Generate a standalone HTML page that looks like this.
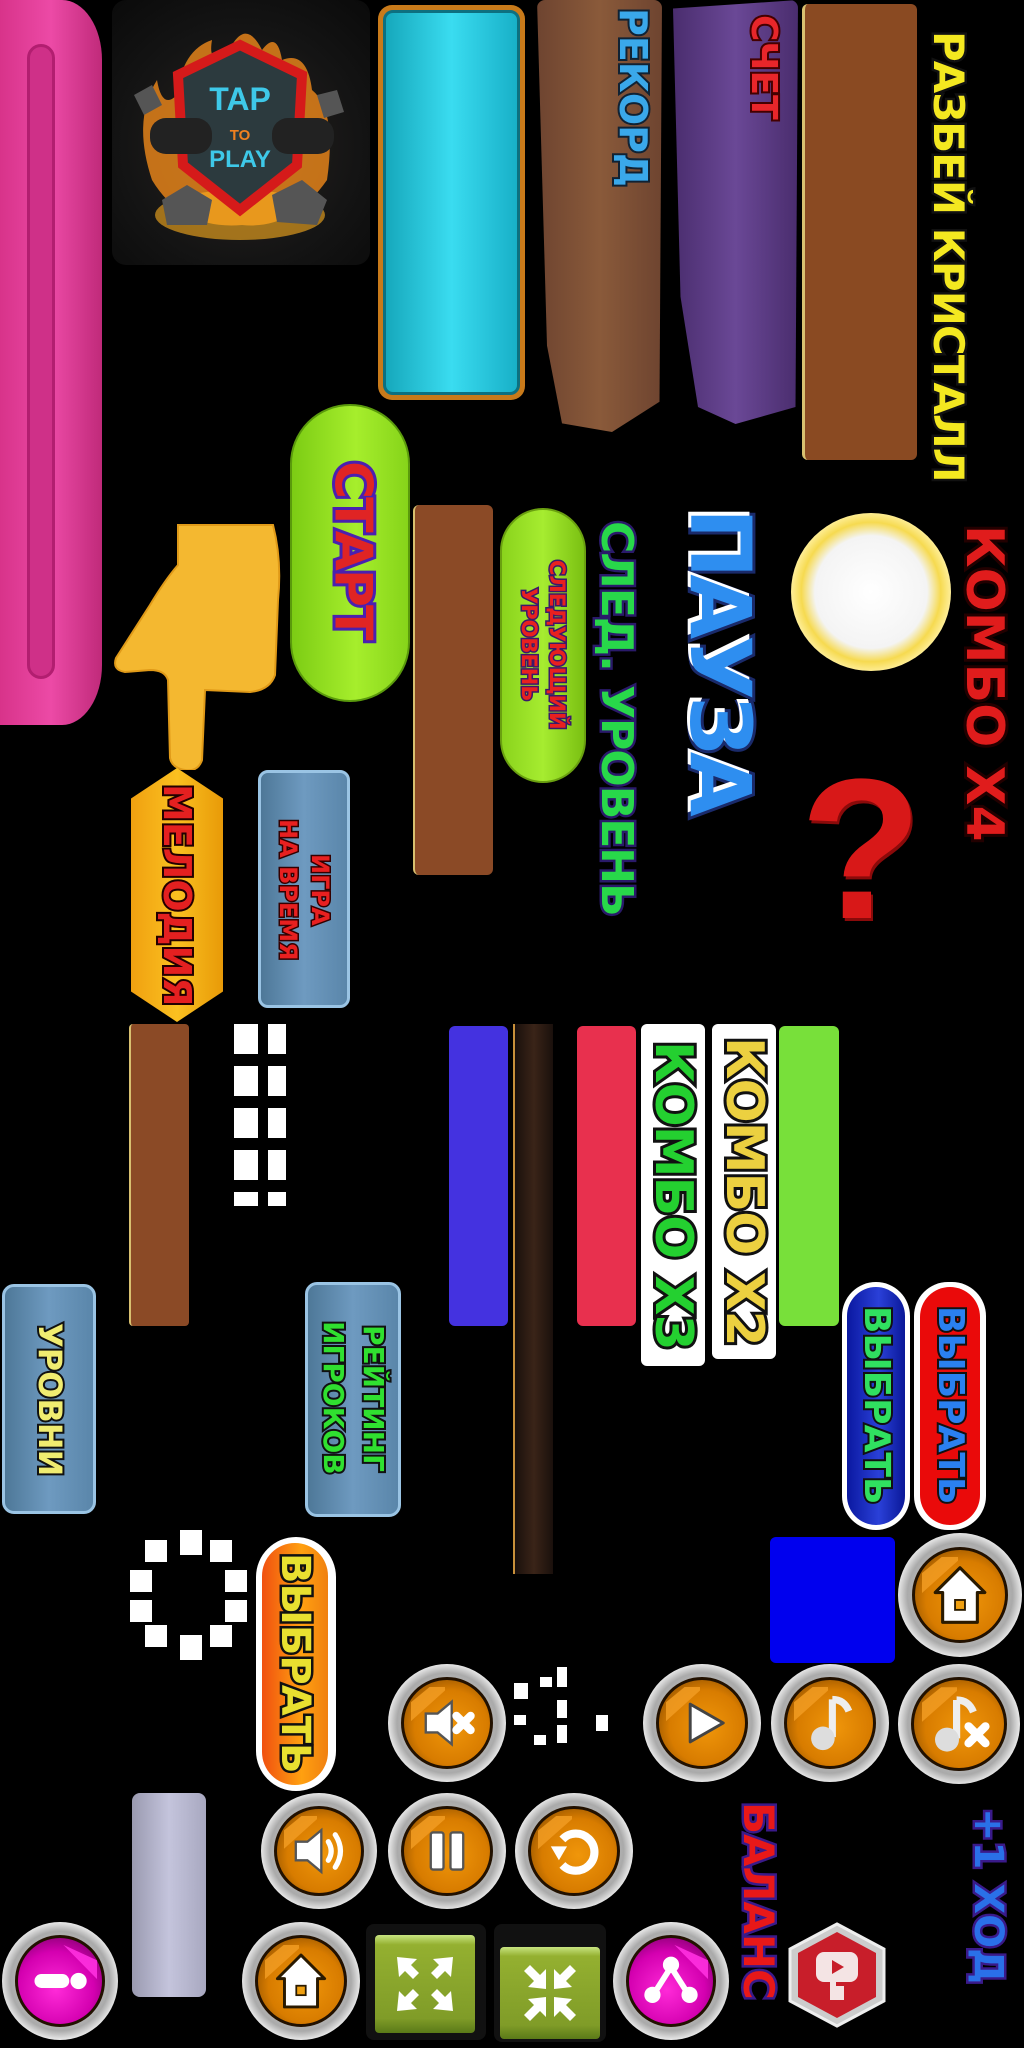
<!DOCTYPE html>
<html><head><meta charset="utf-8">
<style>
*{margin:0;padding:0;box-sizing:border-box}
html,body{width:1024px;height:2048px;background:#000;overflow:hidden}
body{position:relative;font-family:"Liberation Sans","DejaVu Sans",sans-serif}
.a{position:absolute}
.v{position:absolute;writing-mode:vertical-rl;font-weight:700;font-family:"DejaVu Sans","Liberation Sans",sans-serif;white-space:nowrap;line-height:1;text-align:center;display:flex;align-items:center;justify-content:center;paint-order:stroke fill}
.btn{position:absolute;border-radius:50%;background:radial-gradient(circle,#eee 0,#aaa 60%,#fff 75%,#888 100%)}
.btn .in{position:absolute;left:11%;top:11%;right:11%;bottom:11%;border-radius:50%;background:radial-gradient(circle at 55% 55%,#f0960a 0,#d87c00 55%,#6a3a00 100%);border:3px solid #221100;overflow:hidden}
.btn .in:before{content:"";position:absolute;left:8%;top:8%;width:40%;height:40%;background:#f09a20;clip-path:polygon(0 100%,0 45%,55% 0,100% 0,100% 10%);opacity:.9}
.btn.pk .in{background:radial-gradient(circle at 45% 60%,#ff2ad8 0,#d400b0 55%,#5a0050 100%)}
.btn.pk .in:before{left:auto;right:6%;background:#ff30e0;clip-path:polygon(0 0,100% 45%,100% 100%)}
.btn svg{position:absolute;left:0;top:0;width:100%;height:100%}
</style></head><body>

<div class="a" style="left:0;top:0;width:102px;height:725px;background:linear-gradient(90deg,#d8338a,#ec4aa6 50%,#c02a7a);border-radius:0 40px 40px 0/0 60px 60px 0"></div>
<div class="a" style="left:27px;top:44px;width:28px;height:635px;border-radius:14px;background:#cf3088;border:3px solid #b21e70"></div>

<div class="a" style="left:112px;top:0;width:258px;height:265px;background:radial-gradient(circle at 50% 55%,#2a2420,#141414 60%,#0a0a0a);border-radius:14px"></div>
<svg class="a" style="left:112px;top:0" width="258" height="265" viewBox="0 0 258 265">
 <path d="M40 180 Q20 120 45 80 Q50 110 65 95 Q70 50 100 40 Q95 70 120 45 Q135 20 150 50 Q165 30 170 60 Q195 50 200 90 Q225 110 215 180 Q180 230 130 225 Q70 230 40 180Z" fill="#f08a1a" opacity=".8"/>
 <ellipse cx="128" cy="215" rx="85" ry="25" fill="#ffb020" opacity=".6"/>
 <path d="M128 45 L190 75 L185 165 L128 210 L71 165 L66 75 Z" fill="#2c3a3e" stroke="#d51a1a" stroke-width="10"/>
 <text x="128" y="110" fill="#3ec8e8" font-family="Liberation Sans" font-weight="bold" font-size="32" text-anchor="middle">TAP</text>
 <text x="128" y="140" fill="#f08020" font-family="Liberation Sans" font-weight="bold" font-size="15" text-anchor="middle">TO</text>
 <text x="128" y="167" fill="#3ec8e8" font-family="Liberation Sans" font-weight="bold" font-size="24" text-anchor="middle">PLAY</text>
 <rect x="38" y="118" width="62" height="36" rx="16" fill="#222"/>
 <rect x="160" y="118" width="62" height="36" rx="16" fill="#222"/>
 <path d="M50 200 L75 185 L100 200 L95 225 L55 225Z" fill="#555"/><path d="M160 195 L190 180 L215 200 L205 225 L165 222Z" fill="#555"/>
 <path d="M22 95 L40 85 L50 105 L32 115Z" fill="#555"/><path d="M205 95 L225 90 L232 112 L212 118Z" fill="#555"/>
</svg>

<div class="a" style="left:378px;top:5px;width:147px;height:395px;border-radius:14px;background:#c87a1a;padding:5px">
 <div style="width:100%;height:100%;border-radius:10px;background:linear-gradient(90deg,#16a8bc,#3adcf0 50%,#18b0c8);border:3px solid #0d7080"></div>
</div>

<div class="a" style="left:537px;top:0;width:125px;height:432px;background:linear-gradient(90deg,#6e4430,#8a5a3a 50%,#6e4430);clip-path:polygon(0 0,100% 0,98% 93%,60% 100%,20% 98%,8% 80%);border-radius:8px"></div>
<div class="v" style="left:611px;top:10px;width:44px;height:175px;font-size:38px;color:#3aa8ea;-webkit-text-stroke:4px #123">РЕКОРД</div>

<div class="a" style="left:673px;top:0;width:125px;height:424px;background:linear-gradient(90deg,#4a2d6e,#6a4896 50%,#4a2d6e);clip-path:polygon(0 2%,100% 0,98% 96%,50% 100%,20% 96%,6% 70%);border-radius:8px"></div>
<div class="v" style="left:742px;top:16px;width:42px;height:102px;font-size:36px;color:#e8262a;-webkit-text-stroke:4px #400">СЧЕТ</div>

<div class="a" style="left:802px;top:4px;width:115px;height:456px;background:#8a4a22;border-left:3px solid #d8c070;border-radius:6px"></div>
<div class="v" style="left:921px;top:7px;width:54px;height:498px;font-size:42px;color:#f4e820;-webkit-text-stroke:5px #111;letter-spacing:-1px">РАЗБЕЙ КРИСТАЛЛ</div>

<div class="a" style="left:791px;top:513px;width:160px;height:158px;border-radius:50%;background:radial-gradient(circle,#fff 0,#f4f4f4 50%,#f6da50 62%,#fff0a0 72%,#fff 80%,#e8e8e8 100%)"></div>
<div class="v" style="left:951px;top:516px;width:66px;height:334px;font-size:52px;color:#e01c1c;-webkit-text-stroke:6px #200">КОМБО Х4</div>

<div class="v" style="left:669px;top:509px;width:102px;height:302px;font-size:84px;color:#2e8ef0;-webkit-text-stroke:6px #1a2a6a;text-shadow:-4px 3px 0 #fff;letter-spacing:-4px">ПАУЗА</div>

<div class="a" style="left:800px;top:755px;width:120px;height:190px;font-weight:700;font-size:200px;line-height:190px;color:#d81818;text-align:center;text-shadow:2px 3px 0 #8a0a0a">?</div>

<div class="v" style="left:590px;top:516px;width:52px;height:405px;font-size:44px;color:#28d84a;-webkit-text-stroke:5px #2a1a6a;letter-spacing:-1px">СЛЕД. УРОВЕНЬ</div>

<div class="a" style="left:500px;top:508px;width:86px;height:275px;border-radius:43px;background:linear-gradient(90deg,#8ad31c,#a6ec30 50%,#7ac012);border:2px solid #6aa010"></div>
<div class="v" style="left:512px;top:560px;width:62px;height:170px;font-size:21px;line-height:28px;color:#e82020;-webkit-text-stroke:3px #3a1a6a">СЛЕДУЮЩИЙ<br>УРОВЕНЬ</div>

<div class="a" style="left:413px;top:505px;width:80px;height:370px;background:#8b4a26;border-left:2px solid #d8c070;border-radius:6px"></div>

<div class="a" style="left:290px;top:404px;width:120px;height:298px;border-radius:60px;background:linear-gradient(90deg,#7ccc14,#a6ee2c 55%,#86d41a);border:2px solid #5a9a0c"></div>
<div class="v" style="left:325px;top:465px;width:55px;height:170px;font-size:52px;color:#e02424;-webkit-text-stroke:6px #4a20b0;letter-spacing:-2px">СТАРТ</div>

<svg class="a" style="left:110px;top:520px" width="175" height="250" viewBox="0 0 175 250">
 <path d="M68 5 L163 5 Q172 40 168 80 L165 155 Q160 170 140 172 L95 170 L92 240 Q88 252 75 250 Q62 248 60 238 L58 160 Q55 150 40 150 L15 152 Q2 150 6 138 L40 85 Q55 60 68 45 Z" fill="#f4b830" stroke="#e09a18" stroke-width="2"/>
</svg>

<div class="a" style="left:131px;top:768px;width:92px;height:254px;background:linear-gradient(90deg,#f0a010,#fac020 50%,#e89a08);clip-path:polygon(50% 0,100% 12%,100% 88%,50% 100%,0 88%,0 12%)"></div>
<div class="v" style="left:150px;top:790px;width:54px;height:210px;font-size:38px;color:#e42020;-webkit-text-stroke:4px #200">МЕЛОДИЯ</div>

<div class="a" style="left:258px;top:770px;width:92px;height:238px;background:linear-gradient(90deg,#4e7898,#6e9ac0 50%,#5a86aa);border-radius:10px;border:3px solid #9ac4e4"></div>
<div class="v" style="left:268px;top:800px;width:72px;height:180px;font-size:24px;line-height:32px;color:#e82020;-webkit-text-stroke:3px #300">ИГРА<br>НА ВРЕМЯ</div>

<div class="a" style="left:129px;top:1024px;width:60px;height:302px;background:#8b4a26;border-left:2px solid #d8c070;border-radius:4px"></div>
<div class="a" style="left:234px;top:1024px;width:52px;height:182px;background:repeating-linear-gradient(180deg,#fff 0 30px,#000 30px 42px)"></div>
<div class="a" style="left:258px;top:1024px;width:10px;height:182px;background:#000"></div>
<div class="a" style="left:449px;top:1026px;width:59px;height:300px;background:#4432e0;border-radius:6px"></div>
<div class="a" style="left:513px;top:1024px;width:40px;height:550px;background:linear-gradient(90deg,#1a100c,#3a2418 50%,#1a100c);border-left:2px solid #c8903a"></div>
<div class="a" style="left:577px;top:1026px;width:59px;height:300px;background:#e8304e;border-radius:6px"></div>
<div class="a" style="left:779px;top:1026px;width:60px;height:300px;background:#78e03a;border-radius:6px"></div>
<div class="v" style="left:641px;top:1024px;width:64px;height:342px;font-size:52px;color:#24d030;-webkit-text-stroke:6px #111;background:#fff;border-radius:6px;letter-spacing:-1px">КОМБО Х3</div>
<div class="v" style="left:712px;top:1024px;width:64px;height:335px;font-size:52px;color:#ecd040;-webkit-text-stroke:6px #111;background:#fff;border-radius:6px;letter-spacing:-1px">КОМБО Х2</div>

<div class="a" style="left:2px;top:1284px;width:94px;height:230px;background:linear-gradient(90deg,#4e7898,#6e9ac0 50%,#5a86aa);border-radius:12px;border:3px solid #9ac4e4"></div>
<div class="v" style="left:25px;top:1330px;width:50px;height:140px;font-size:32px;color:#f0ec70;-webkit-text-stroke:4px #111">УРОВНИ</div>
<div class="a" style="left:305px;top:1282px;width:96px;height:235px;background:linear-gradient(90deg,#4e7898,#6e9ac0 50%,#5a86aa);border-radius:12px;border:3px solid #9ac4e4"></div>
<div class="v" style="left:312px;top:1318px;width:82px;height:160px;font-size:28px;line-height:40px;color:#30e030;-webkit-text-stroke:4px #111">РЕЙТИНГ<br>ИГРОКОВ</div>

<div class="a" style="left:842px;top:1282px;width:68px;height:248px;background:#fff;border-radius:34px"></div>
<div class="a" style="left:847px;top:1287px;width:58px;height:238px;background:linear-gradient(90deg,#0a18a0,#2a40d8 55%,#0a1898);border-radius:29px"></div>
<div class="v" style="left:852px;top:1310px;width:48px;height:190px;font-size:36px;color:#30e060;-webkit-text-stroke:4px #111">ВЫБРАТЬ</div>
<div class="a" style="left:914px;top:1282px;width:72px;height:248px;background:#fff;border-radius:34px"></div>
<div class="a" style="left:920px;top:1287px;width:60px;height:238px;background:#ea0a0a;border-radius:30px"></div>
<div class="v" style="left:926px;top:1310px;width:48px;height:190px;font-size:36px;color:#2a80f0;-webkit-text-stroke:4px #111">ВЫБРАТЬ</div>

<svg class="a" style="left:125px;top:1525px" width="135" height="150" viewBox="0 0 135 150">
 <g fill="#fff"><rect x="55" y="5" width="22" height="25"/><rect x="20" y="15" width="22" height="22"/><rect x="85" y="15" width="22" height="22"/><rect x="5" y="45" width="22" height="22"/><rect x="100" y="45" width="22" height="22"/><rect x="5" y="75" width="22" height="22"/><rect x="100" y="75" width="22" height="22"/><rect x="20" y="100" width="22" height="22"/><rect x="85" y="100" width="22" height="22"/><rect x="55" y="110" width="22" height="25"/></g>
</svg>

<div class="a" style="left:256px;top:1537px;width:80px;height:254px;background:#fff;border-radius:40px"></div>
<div class="a" style="left:262px;top:1543px;width:66px;height:242px;background:linear-gradient(90deg,#f05010,#ffa010 60%,#f08010);border-radius:33px"></div>
<div class="v" style="left:268px;top:1568px;width:54px;height:190px;font-size:40px;color:#e8e030;-webkit-text-stroke:5px #111">ВЫБРАТЬ</div>

<div class="a" style="left:770px;top:1537px;width:125px;height:126px;background:#0000ee;border-radius:6px"></div>

<div class="btn" style="left:898px;top:1533px;width:124px;height:124px"><div class="in"></div><svg viewBox="0 0 100 100"><path d="M50 28 L70 48 L64 48 L64 72 L36 72 L36 48 L30 48 Z" fill="#fff" stroke="#2a1a00" stroke-width="2.5" stroke-linejoin="round"/><rect x="46" y="54" width="8" height="8" fill="#f0a010" stroke="#2a1a00" stroke-width="1.5"/></svg></div>

<div class="btn" style="left:388px;top:1664px;width:118px;height:118px"><div class="in"></div><svg viewBox="0 0 100 100"><path d="M32 42 L42 42 L54 32 L54 68 L42 58 L32 58 Z" fill="#fff" stroke="#555" stroke-width="2"/><path d="M58 44 L70 56 M70 44 L58 56" stroke="#fff" stroke-width="7" stroke-linecap="round"/></svg></div>

<svg class="a" style="left:512px;top:1665px" width="100" height="90" viewBox="0 0 100 90"><g fill="#fff"><rect x="2" y="18" width="14" height="16"/><rect x="28" y="12" width="12" height="10"/><rect x="45" y="2" width="10" height="20"/><rect x="45" y="35" width="10" height="18"/><rect x="2" y="50" width="12" height="10"/><rect x="22" y="70" width="12" height="10"/><rect x="84" y="50" width="12" height="16"/><rect x="45" y="60" width="10" height="18"/></g></svg>

<div class="btn" style="left:643px;top:1664px;width:118px;height:118px"><div class="in"></div><svg viewBox="0 0 100 100"><path d="M40 34 L68 50 L40 66 Z" fill="#fff" stroke="#444" stroke-width="2.5" stroke-linejoin="round"/></svg></div>
<div class="btn" style="left:771px;top:1664px;width:118px;height:118px"><div class="in"></div><svg viewBox="0 0 100 100"><path d="M52 30 L52 62" stroke="#eee" stroke-width="6"/><path d="M52 30 Q62 30 66 40" stroke="#eee" stroke-width="6" fill="none"/><circle cx="44" cy="63" r="10" fill="#ddd"/></svg></div>
<div class="btn" style="left:898px;top:1664px;width:122px;height:120px"><div class="in"></div><svg viewBox="0 0 100 100"><path d="M48 30 L48 62" stroke="#eee" stroke-width="6"/><path d="M48 30 Q58 30 62 40" stroke="#eee" stroke-width="6" fill="none"/><circle cx="40" cy="63" r="10" fill="#ddd"/><path d="M58 52 L72 66 M72 52 L58 66" stroke="#fff" stroke-width="7" stroke-linecap="round"/></svg></div>

<div class="a" style="left:132px;top:1793px;width:74px;height:204px;background:linear-gradient(90deg,#9a9ab0,#c4c4dc 50%,#a8a8c0);border-radius:8px"></div>

<div class="btn" style="left:261px;top:1793px;width:116px;height:116px"><div class="in"></div><svg viewBox="0 0 100 100"><path d="M30 42 L40 42 L52 32 L52 68 L40 58 L30 58 Z" fill="#fff" stroke="#555" stroke-width="2"/><path d="M58 42 Q63 50 58 58 M64 36 Q73 50 64 64" stroke="#fff" stroke-width="4.5" fill="none" stroke-linecap="round"/></svg></div>
<div class="btn" style="left:388px;top:1793px;width:118px;height:116px"><div class="in"></div><svg viewBox="0 0 100 100"><rect x="36" y="34" width="11" height="32" rx="2" fill="#fff" stroke="#555" stroke-width="2"/><rect x="53" y="34" width="11" height="32" rx="2" fill="#fff" stroke="#555" stroke-width="2"/></svg></div>
<div class="btn" style="left:515px;top:1793px;width:118px;height:116px"><div class="in"></div><svg viewBox="0 0 100 100"><path d="M40 40 A16 16 0 1 1 40 62" stroke="#fff" stroke-width="7" fill="none"/><path d="M30 46 L44 46 L37 58 Z" fill="#fff"/></svg></div>

<div class="v" style="left:731px;top:1798px;width:54px;height:206px;font-size:42px;color:#e81818;-webkit-text-stroke:5px #3a1a8a">БАЛАНС</div>
<div class="v" style="left:960px;top:1801px;width:56px;height:190px;font-size:40px;color:#2a70e8;-webkit-text-stroke:5px #3a1a8a">+1 ХОД</div>

<div class="btn pk" style="left:2px;top:1922px;width:116px;height:118px"><div class="in"></div><svg viewBox="0 0 100 100"><rect x="28" y="44" width="30" height="12" rx="6" fill="#fff"/><circle cx="66" cy="50" r="7" fill="#fff"/></svg></div>
<div class="btn" style="left:242px;top:1922px;width:118px;height:118px"><div class="in"></div><svg viewBox="0 0 100 100"><path d="M50 28 L70 48 L64 48 L64 72 L36 72 L36 48 L30 48 Z" fill="#fff" stroke="#2a1a00" stroke-width="2.5" stroke-linejoin="round"/><rect x="46" y="54" width="8" height="8" fill="#f0a010" stroke="#2a1a00" stroke-width="1.5"/></svg></div>

<div class="a" style="left:366px;top:1924px;width:120px;height:116px;background:#111;border-radius:8px"></div>
<div class="a" style="left:375px;top:1935px;width:100px;height:98px;background:linear-gradient(180deg,#c8e480 0,#94b030 10%,#809c28 85%,#5a7a18 100%);border-radius:4px"></div>
<svg class="a" style="left:375px;top:1935px" width="100" height="98" viewBox="0 0 100 98"><g fill="#fff"><path d="M22 22 L42 24 L36 30 L44 38 L38 44 L30 36 L24 42 Z"/><path d="M78 22 L58 24 L64 30 L56 38 L62 44 L70 36 L76 42 Z"/><path d="M22 76 L42 74 L36 68 L44 60 L38 54 L30 62 L24 56 Z"/><path d="M78 76 L58 74 L64 68 L56 60 L62 54 L70 62 L76 56 Z"/></g></svg>

<div class="a" style="left:494px;top:1924px;width:112px;height:118px;background:#111;border-radius:8px"></div>
<div class="a" style="left:500px;top:1947px;width:100px;height:92px;background:linear-gradient(180deg,#c8e480 0,#94b030 10%,#809c28 85%,#5a7a18 100%);border-radius:4px"></div>
<svg class="a" style="left:500px;top:1947px" width="100" height="92" viewBox="0 0 100 92"><g fill="#fff"><path d="M46 42 L28 40 L34 34 L24 24 L30 18 L40 28 L46 22 Z"/><path d="M54 42 L72 40 L66 34 L76 24 L70 18 L60 28 L54 22 Z"/><path d="M46 50 L28 52 L34 58 L24 68 L30 74 L40 64 L46 70 Z"/><path d="M54 50 L72 52 L66 58 L76 68 L70 74 L60 64 L54 70 Z"/></g></svg>

<div class="btn pk" style="left:613px;top:1922px;width:116px;height:118px"><div class="in"></div><svg viewBox="0 0 100 100"><g stroke="#fff" stroke-width="5" fill="none"><path d="M50 38 L36 60 M50 38 L64 60"/></g><circle cx="50" cy="36" r="7" fill="#fff"/><circle cx="34" cy="62" r="7" fill="#fff"/><circle cx="66" cy="62" r="7" fill="#fff"/></svg></div>

<svg class="a" style="left:786px;top:1922px" width="102" height="106" viewBox="0 0 102 106">
 <path d="M51 2 L98 27 L98 79 L51 104 L4 79 L4 27 Z" fill="#ccc" stroke="#eee" stroke-width="3"/>
 <path d="M51 10 L90 31 L90 75 L51 96 L12 75 L12 31 Z" fill="#c81e2a"/>
 <rect x="30" y="30" width="42" height="30" rx="8" fill="#f4e4e4"/>
 <path d="M46 38 L58 45 L46 52 Z" fill="#c81e2a"/>
 <path d="M44 58 L44 78 L58 78 L58 64 L50 64 L50 58 Z" fill="#f4e4e4"/>
</svg>

</body></html>
